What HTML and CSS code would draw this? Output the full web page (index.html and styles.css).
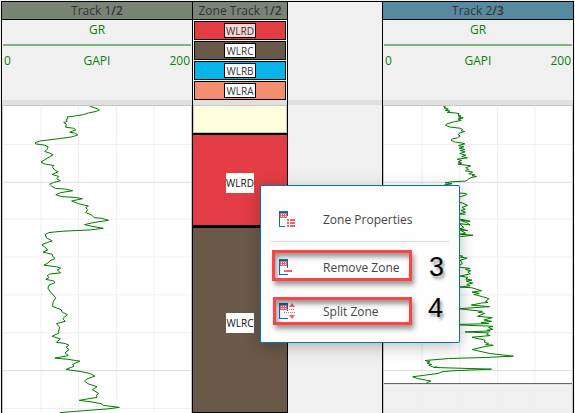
FILE: index.html
```html
<!DOCTYPE html>
<html lang="en">
<head>
<meta charset="utf-8">
<title>Well log tracks</title>
<link rel="stylesheet" href="styles.css">
</head>
<body>
<main class="tracks">
  <section class="track">
    <h2 class="title">Track 1<b>/2</b></h2>
    <div class="head curve-head">
      <div class="curve-name">GR</div>
      <div class="scale"><span>0</span><span>GAPI</span><span>200</span></div>
    </div>
    <svg class="plot" viewBox="6 15 570 924" preserveAspectRatio="none" role="img" aria-label="GR curve">
      <path class="grid" d="M121.500 15V939M235.500 15V939M349.500 15V939M463.500 15V939M6 130.500H576M6 355.500H576M6 469.500H576M6 583.500H576M6 697.500H576M6 925.500H576"/>
      <path class="grid major" d="M6 244.500H576M6 811.500H576"/>
      <path class="curve" d="M270 16L282 20 292 23 298 27 290 31 265 36 250 41 225 45 200 48 203 53 197 56 201 61 190 65 198 69 196 79 220 82 227 87 208 94 225 97 233 102 215 108 170 114 120 120 104 125 105 129 133 133 143 138 140 145 133 152 148 157 158 162 140 172 121 184 135 190 160 194 156 199 162 207 173 213 155 221 175 227 169 234 180 240 160 245 148 250 154 257 165 263 195 265 217 270 180 276 166 282 185 288 225 290 247 294 214 301 235 309 265 316 257 321 263 327 257 336 275 343 282 351 305 353 326 359 280 366 253 372 275 377 310 383 270 388 185 392 145 396 134 402 138 412 155 421 140 426 124 433 134 441 142 448 127 455 155 461 157 468 164 474 148 481 142 488 130 494 168 499 181 503 171 509 181 517 146 521 140 527 146 531 136 537 158 541 164 546 146 554 142 563 150 575 166 592 158 605 156 618 182 628 186 636 201 643 187 655 195 663 168 670 178 681 174 693 176 698 155 708 180 716 168 726 195 730 206 735 197 741 206 748 194 758 204 766 163 774 200 777 239 783 217 793 221 798 197 808 240 814 270 820 285 828 259 837 253 843 264 851 291 860 277 869 296 880 289 886 291 892 260 897 237 901 270 905 304 911 310 916 359 922 320 927 250 932 178 938"/>
    </svg>
  </section>

  <section class="track">
    <h2 class="title">Zone Track 1<b>/2</b></h2>
    <ul class="head legend">
      <li class="wlrd"><span class="active">WLRD</span></li>
      <li class="wlrc"><span>WLRC</span></li>
      <li class="wlrb"><span>WLRB</span></li>
      <li class="wlra"><span>WLRA</span></li>
    </ul>
    <div class="zones">
      <div class="zone open"></div>
      <div class="zone wlrd"><span>WLRD</span></div>
      <div class="zone wlrc"><span>WLRC</span></div>
    </div>
  </section>

  <div class="spacer"></div>

  <section class="track last">
    <h2 class="title blue">Track 2<b>/3</b></h2>
    <div class="head curve-head">
      <div class="curve-name">GR</div>
      <div class="scale"><span>0</span><span>GAPI</span><span>200</span></div>
    </div>
    <svg class="plot" viewBox="24 30 570 924" preserveAspectRatio="none" role="img" aria-label="GR curve">
      <rect class="beyond" x="24" y="867" width="570" height="87"/>
      <path class="grid" d="M139.500 30V954M253.500 30V954M367.500 30V954M481.500 30V954M24 145.500H594M24 370.500H594M24 484.500H594M24 598.500H594M24 712.500H594M24 940.500H594"/>
      <path class="grid major" d="M24 259.500H594M24 826.500H594"/>
      <path class="limit" d="M24 865.500H594"/>
      <path class="curve" d="M204 31L211 33 206 36 219 39 210 43 224 45 216 49 240 51 252 53 248 58 258 60 250 63 264 66 248 69 258 73 235 78 214 84 211 88 222 93 255 97 262 101 258 104 269 107 254 111 248 116 255 120 246 126 232 129 227 133 238 138 258 141 269 144 250 149 266 153 252 157 269 161 255 164 270 168 254 173 272 178 260 182 277 186 246 190 259 194 249 199 260 202 248 205 287 210 272 216 281 221 271 225 293 229 281 234 299 237 291 240 305 242 287 246 280 250 272 256 230 258 209 261 230 264 207 268 226 270"/>
      <path class="curve" d="M230 291L270 293 276 296 260 302 240 307M240 318L262 322 277 329 261 335 270 341 258 344 271 350 252 355 271 356M240 368L253 370 285 377 256 374 275 381 285 388 253 384 266 396 253 400 278 405 255 403 271 413 253 416 294 419 255 423M245 478L263 482 256 485 276 488 255 494 262 504 252 510M252 515L285 519 271 522 287 526 278 530 286 535 255 542 279 546 272 551 291 554 273 557 293 563 275 567 285 571 253 575 290 577 320 586 291 590 313 594 296 597 323 604 342 610 332 618 339 621 320 623 289 629 344 634 250 640 322 648 310 651 329 654 308 663 352 667 327 674 350 678 318 682 342 685 230 688 354 693 341 697 354 702 336 705 346 707 270 710 341 713 335 718 346 721 291 726 331 735 328 741 341 745 332 748 355 750 325 755 291 763 345 775 416 783 330 787 220 790 149 796 163 800 154 804 168 808 160 810 174 816 185 816 175 817 350 822 230 827 200 830 188 835 150 840 111 845 125 850 166 858 153 863"/>
    </svg>
  </section>
</main>

<div class="menu" role="menu">
  <button class="item" role="menuitem">
    <svg class="icon" viewBox="0 0 16 16" aria-hidden="true">
      <path class="page" d="M0 0H9V5H8V2H1V15H6V16H0Z"/>
      <path class="mark" d="M1 2H8V7H1ZM8 8H10V10H8ZM11 8H16V10H11ZM8 11H10V13H8ZM11 11H16V13H11ZM8 14H10V16H8ZM11 14H16V16H11Z"/>
      <path class="holes" d="M2 3H3V4H2ZM4 3H5V4H4ZM6 3H7V4H6ZM2 5H3V6H2ZM4 5H5V6H4ZM6 5H7V6H6Z"/>
    </svg>
    <span>Zone Properties</span>
  </button>
  <hr>
  <button class="item" role="menuitem">
    <svg class="icon" viewBox="0 0 16 16" aria-hidden="true">
      <path class="page" d="M0 0H9V9H8V2H1V15H9V16H0Z"/>
      <path class="mark" d="M1 2H8V7H1ZM5 11H13V13H5Z"/>
      <path class="holes" d="M2 3H3V4H2ZM4 3H5V4H4ZM6 3H7V4H6ZM2 5H3V6H2ZM4 5H5V6H4ZM6 5H7V6H6Z"/>
    </svg>
    <span>Remove Zone</span>
  </button>
  <button class="item" role="menuitem">
    <svg class="icon" viewBox="0 0 16 16" aria-hidden="true">
      <path class="page" d="M0 0H9V8H8V2H1V15H9V16H0Z"/>
      <path class="mark" d="M1 2H8V7H1ZM13 0L16 4H10ZM13 16L10 12H16ZM6 6H7V7H6ZM8 6H9V7H8ZM10 6H11V7H10ZM12 6H13V7H12ZM14 6H15V7H14ZM5 9H6V10H5ZM7 9H8V10H7ZM9 9H10V10H9ZM11 9H12V10H11ZM13 9H14V10H13ZM15 9H16V10H15Z"/>
      <path class="holes" d="M2 3H3V4H2ZM4 3H5V4H4ZM6 3H7V4H6ZM2 5H3V6H2ZM4 5H5V6H4ZM6 5H7V6H6Z"/>
    </svg>
    <span>Split Zone</span>
  </button>
  <div class="callout remove"></div>
  <div class="callout split"></div>
  <span class="step three">3</span>
  <span class="step four">4</span>
</div>
</body>
</html>
```
FILE: styles.css
```css
* { box-sizing: border-box; }

body {
  margin: 0;
  background: #f0f0f0;
  font-family: "Open Sans", "Noto Sans", sans-serif;
  font-size: 12px;
  color: #333;
}

.tracks {
  display: grid;
  grid-template-columns: 191fr 96fr 94fr 192fr;
  min-height: 100vh;
  padding: 1px 1px 0;
}

.track,
.spacer {
  display: flex;
  flex-direction: column;
  min-width: 0;
  border-top: 1px solid #000;
}

.track { border-left: 1px solid #000; }
.track.last { border-right: 1px solid #000; }
.track:has(.zones) { border-right: 1px solid #000; }

.title {
  height: 18px;
  margin: 0;
  border-bottom: 1px solid #000;
  background: #788575;
  font-size: 12px;
  font-weight: 400;
  line-height: 17px;
  text-align: center;
  white-space: nowrap;
}

.title b { font-weight: 600; }
.title.blue { background: #588a9f; }

.head {
  height: 85px;
  margin: 0;
  border-bottom: 5px solid #e0e0e0;
}

.curve-head { color: #0a800a; }

.curve-name {
  height: 26px;
  margin: 0 1px;
  border-bottom: 2px solid #7ab87c;
  line-height: 20px;
  text-align: center;
}

.scale {
  display: grid;
  grid-template-columns: 1fr auto 1fr;
  padding: 0 2px;
  line-height: 29px;
}

.scale span:last-child { text-align: right; }

.plot {
  display: block;
  flex: 1;
  width: 100%;
  height: 0;
  min-height: 308px;
  border: solid #c6c6c6;
  border-width: 1px 1px 0;
  background: #fff;
}

.plot path { vector-effect: non-scaling-stroke; fill: none; }
.grid { stroke: #eee; }
.grid.major { stroke: #ddd; }
.limit { stroke: #555; }
.beyond { fill: #f0f0f0; }
.plot .curve { stroke: #007c00; stroke-width: 1px; stroke-linejoin: round; }

.legend {
  display: flex;
  flex-direction: column;
  gap: 1px;
  padding: 1px 1px 0;
  list-style: none;
  background: #fafafa;
}

.legend li {
  display: flex;
  align-items: center;
  justify-content: center;
  height: 19px;
  border: 1px solid #000;
}

.legend span {
  width: 32px;
  height: 15px;
  border: 1px solid #000;
  background: #fff;
  font-size: 10px;
  line-height: 14px;
  text-align: center;
}

.legend .active { background: #ffd6d6; }

.wlrd { background: #e23c44; }
.wlrc { background: #6a5949; }
.wlrb { background: #08b4e8; }
.wlra { background: #f48e70; }

.zones {
  display: flex;
  flex: 1;
  flex-direction: column;
  border-bottom: 1px solid #000;
}

.zone {
  display: flex;
  align-items: center;
  justify-content: center;
  padding-top: 6px;
}

.zone.open {
  height: 28px;
  border: 1px solid #c9c9b8;
  background: #ffffe0;
}

.zone.wlrd {
  height: 95px;
  border: solid #000;
  border-width: 2px 0 3px;
}

.zone.wlrc { flex: 1; }

.zone span {
  width: 28px;
  height: 20px;
  background: #fff;
  color: #111;
  font-size: 10px;
  line-height: 21px;
  text-align: center;
}

.spacer::before {
  content: "";
  height: 5px;
  margin-top: 98px;
  background: #e0e0e0;
}

.menu {
  position: absolute;
  top: 185px;
  left: 260px;
  width: 200px;
  padding: 11px 10px 9px;
  border: 1px solid #0078b8;
  border-radius: 2px;
  background: #fefefe;
  box-shadow: 0 4px 16px rgba(0, 0, 0, 0.25);
}

.menu hr {
  height: 1px;
  margin: 0 0 3px;
  border: 0;
  background: #dcdcdc;
}

.item {
  display: flex;
  align-items: center;
  gap: 28px;
  width: 100%;
  height: 44px;
  padding: 0 8px;
  border: 0;
  background: none;
  color: #444;
  font: inherit;
  white-space: nowrap;
}

.icon { flex: none; width: 16px; height: 16px; }
.page { fill: #0070b4; }
.mark { fill: #ee6468; }
.holes { fill: #fff; }

.callout {
  position: absolute;
  right: 47px;
  border: 3px solid #fb4444;
  box-shadow: 2px 4px 5px rgba(0, 0, 0, 0.4), inset 2px 4px 5px rgba(0, 0, 0, 0.4);
  pointer-events: none;
}

.callout.remove { top: 64px; width: 140px; height: 31px; }
.callout.split { top: 111px; width: 139px; height: 28px; }

.step {
  position: absolute;
  color: #000;
  font-family: "Liberation Sans", sans-serif;
  font-size: 27px;
  line-height: 30px;
  text-shadow: 2px 3px 3px rgba(0, 0, 0, 0.4);
}

.three { top: 66px; left: 168px; }
.four { top: 107px; left: 167px; }
```
